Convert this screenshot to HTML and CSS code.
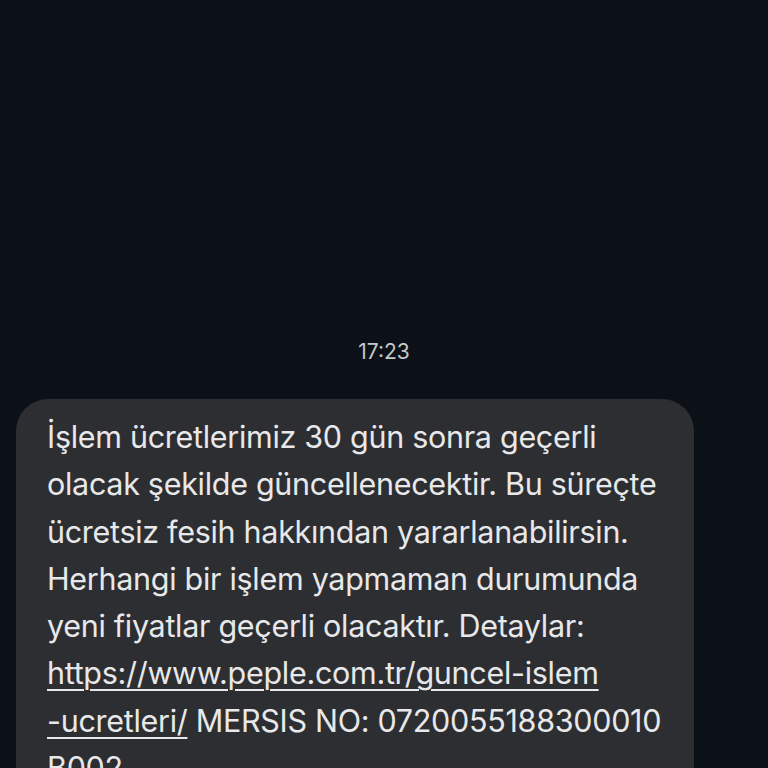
FILE: index.html
```html
<!DOCTYPE html>
<html lang="tr">
<head>
<meta charset="utf-8">
<link rel="stylesheet" href="styles.css">
</head>
<body>
<main class="thread">
  <div class="time">17:23</div>
  <div class="bubble">
    <p class="msg">İşlem ücretlerimiz 30 gün sonra geçerli<br>olacak şekilde güncellenecektir. Bu süreçte<br>ücretsiz fesih hakkından yararlanabilirsin.<br>Herhangi bir işlem yapmaman durumunda<br>yeni fiyatlar geçerli olacaktır. Detaylar:<br><a class="link" href="#">https://www.peple.com.tr/guncel-islem<br>-ucretleri/</a> MERSIS NO: 0720055188300010<br>B002</p>
  </div>
</main>
</body>
</html>
```

FILE: styles.css
```css
html, body {
  margin: 0;
  padding: 0;
  background: #0c1117;
  width: 768px;
  height: 768px;
  overflow: hidden;
}
.thread {
  display: flex;
  flex-direction: column;
  padding-top: 339px;
  font-family: Inter, Roboto, "Noto Sans", sans-serif;
}
.time {
  text-align: center;
  color: #c4c7cb;
  font-size: 21px;
  line-height: 26px;
}
.bubble {
  margin: 34px 0 0 16px;
  width: 678px;
  background: #2c2e31;
  border-radius: 32px;
  padding: 14px 0 20px 31px;
  box-sizing: border-box;
}
.msg {
  margin: 0;
  color: #e8e8ea;
  font-size: 30.5px;
  line-height: 47.3px;
  white-space: nowrap;
  letter-spacing: -0.3px;
}
.link {
  color: #e8e8ea;
  text-decoration: underline;
  text-underline-offset: 5px;
  text-decoration-thickness: 2px;
}
```
